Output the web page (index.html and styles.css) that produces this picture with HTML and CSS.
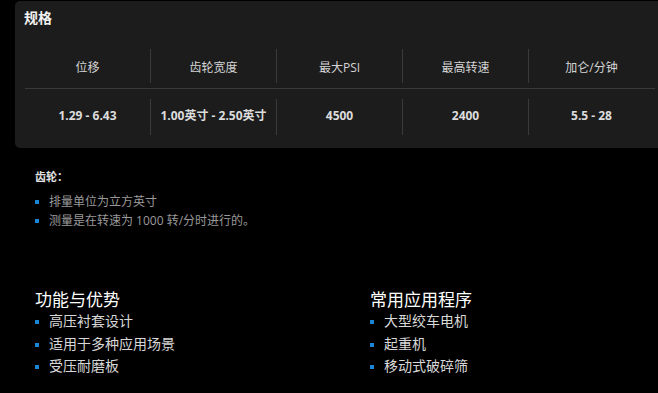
FILE: index.html
```html
<!DOCTYPE html>
<html lang="zh">
<head>
<meta charset="utf-8">
<link rel="stylesheet" href="styles.css">
</head>
<body>
<section class="card">
  <h2 class="card-title">规格</h2>
  <div class="spec">
    <div class="row head">
      <div class="cell">位移</div>
      <div class="cell">齿轮宽度</div>
      <div class="cell">最大PSI</div>
      <div class="cell">最高转速</div>
      <div class="cell">加仑/分钟</div>
    </div>
    <div class="row data">
      <div class="cell">1.29 - 6.43</div>
      <div class="cell">1.00英寸 - 2.50英寸</div>
      <div class="cell">4500</div>
      <div class="cell">2400</div>
      <div class="cell">5.5 - 28</div>
    </div>
  </div>
</section>

<section class="notes">
  <h3 class="notes-title">齿轮：</h3>
  <ul class="list small">
    <li>排量单位为立方英寸</li>
    <li>测量是在转速为 1000 转/分时进行的。</li>
  </ul>
</section>

<section class="cols">
  <div class="col">
    <h3 class="col-title">功能与优势</h3>
    <ul class="list big">
      <li>高压衬套设计</li>
      <li>适用于多种应用场景</li>
      <li>受压耐磨板</li>
    </ul>
  </div>
  <div class="col">
    <h3 class="col-title">常用应用程序</h3>
    <ul class="list big">
      <li>大型绞车电机</li>
      <li>起重机</li>
      <li>移动式破碎筛</li>
    </ul>
  </div>
</section>
</body>
</html>
```

FILE: styles.css
```css
html, body {
  margin: 0;
  padding: 0;
  background: #000;
  overflow: hidden;
  font-family: "Open Sans", "Noto Sans CJK SC", sans-serif;
}
body {
  width: 658px;
  height: 393px;
}
.card {
  margin: 1px -20px 0 15px;
  height: 147px;
  box-sizing: border-box;
  background: #1c1c1c;
  border-radius: 5px;
  padding: 8px 0 0 10px;
}
.card-title {
  margin: 0 0 0 -1px;
  font-size: 14px;
  line-height: 18px;
  font-weight: 700;
  color: #f2f2f2;
}
.spec {
  margin-top: 17px;
  width: 630px;
}
.row {
  display: grid;
  grid-template-columns: 125px 126px 126px 126px 126px;
}
.row.head {
  padding: 5px 0;
  border-bottom: 1px solid #3a3a3a;
}
.row.data {
  padding: 10px 0 0;
}
.cell {
  display: flex;
  align-items: center;
  justify-content: center;
  font-size: 12px;
  color: #d4d4d4;
  white-space: nowrap;
}
.cell + .cell {
  border-left: 1px solid #3a3a3a;
}
.head .cell {
  height: 34px;
  padding-top: 2px;
  box-sizing: border-box;
}
.data .cell {
  height: 36px;
  font-weight: 700;
  color: #dcdcdc;
  padding-bottom: 4px;
  box-sizing: border-box;
}
.notes {
  padding-left: 35px;
  margin-top: 21px;
}
.notes-title {
  margin: 0;
  font-size: 11px;
  line-height: 16px;
  font-weight: 700;
  color: #e0e0e0;
}
.list {
  list-style: none;
  margin: 0;
  padding: 0;
}
.list li {
  position: relative;
  padding-left: 14px;
}
.list li::before {
  content: "";
  position: absolute;
  left: 0;
  width: 4px;
  height: 4px;
  background: #1b86d6;
}
.list.small {
  margin-top: 7px;
}
.list.small li {
  font-size: 12px;
  line-height: 19px;
  color: #9a9a9a;
}
.list.small li::before {
  top: 8px;
}
.cols {
  display: grid;
  grid-template-columns: 335px 1fr;
  padding-left: 35px;
  margin-top: 60px;
}
.col-title {
  margin: 0;
  font-size: 17px;
  line-height: 20px;
  font-weight: 400;
  color: #fff;
}
.list.big li {
  font-size: 14px;
  line-height: 22.5px;
  color: #d8d8d8;
}
.list.big li::before {
  top: 10px;
}
```
